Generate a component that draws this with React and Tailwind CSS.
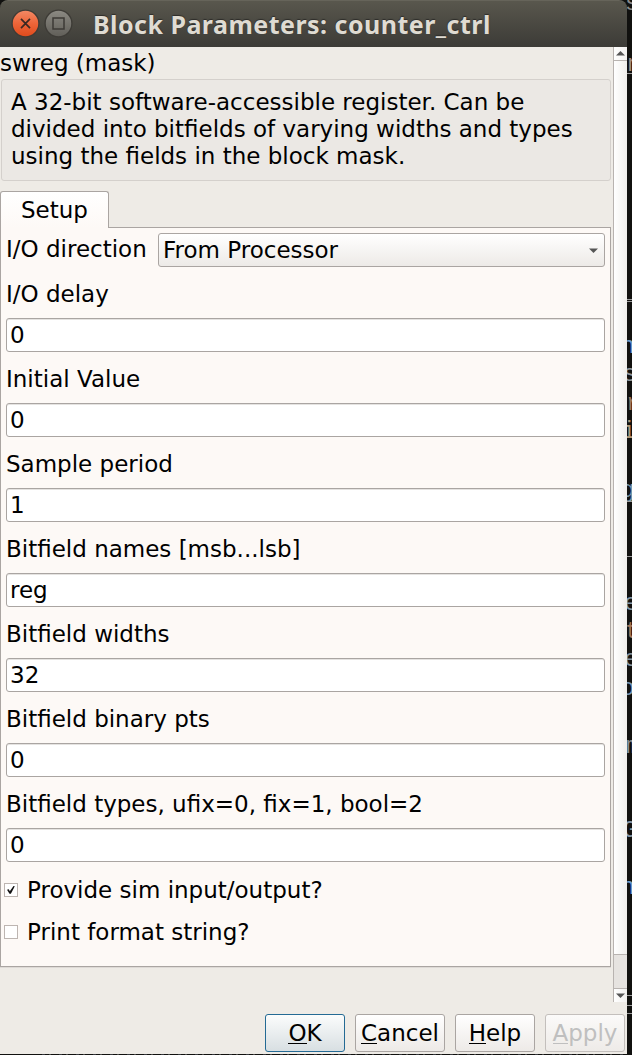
import React from "react";

const fields = [
  ["I/O delay", "0"],
  ["Initial Value", "0"],
  ["Sample period", "1"],
  ["Bitfield names [msb...lsb]", "reg"],
  ["Bitfield widths", "32"],
  ["Bitfield binary pts", "0"],
  ["Bitfield types, ufix=0, fix=1, bool=2", "0"],
];

// Fragments of the terminal window that lies behind the dialog: [glyph, top, colour, left]
const glyphs = [
  ["s", -10, "#8a8a8a", -2],
  ["n", 51, "#a08a80", 0],
  ["n", 333, "#6d9ccb", -6],
  ["s", 361, "#8e9498", -4],
  ["r", 390, "#9a7860", -1],
  ["i", 418, "#b09878", -5],
  ["g", 477, "#7597ad", -6],
  ["e", 590, "#8499a8", -3],
  ["t", 618, "#a07458", -2],
  ["e", 646, "#8797a2", -3],
  ["o", 675, "#7597b5", -6],
  ["m", 733, "#8a8f96", -1],
  ["G", 817, "#8497a8", -4],
  ["n", 874, "#6d9ccb", -6],
];

const lines = [73, 299, 301, 501, 556, 995, 1005, 1013];

function Terminal() {
  return (
    <div className="relative h-[1055px] w-[5px] overflow-hidden bg-[#11110f]">
      {glyphs.map(([g, top, color, left]) => (
        <span
          key={top}
          className="absolute font-['Liberation_Mono',monospace] text-[23px] leading-[28px]"
          style={{ top, left, color }}
        >
          {g}
        </span>
      ))}
      {lines.map((top) => (
        <i key={top} className="absolute left-0 h-px w-[5px] bg-[#9a9a9a]" style={{ top }} />
      ))}
    </div>
  );
}

function TitleBar() {
  return (
    <header className="flex h-[47px] shrink-0 items-center rounded-t-[8px] border-t border-[#66645a] bg-linear-to-b from-[#59574d] to-[#3c3b37] pl-[11px]">
      <svg width="64" height="30" viewBox="0 0 64 30" className="block">
        <defs>
          <linearGradient id="close" x1="0" y1="0" x2="0" y2="1">
            <stop offset="0" stopColor="#f48a66" />
            <stop offset=".5" stopColor="#ed6539" />
            <stop offset="1" stopColor="#df4a1b" />
          </linearGradient>
          <linearGradient id="max" x1="0" y1="0" x2="0" y2="1">
            <stop offset="0" stopColor="#8c8a83" />
            <stop offset="1" stopColor="#605e58" />
          </linearGradient>
        </defs>
        <circle cx="14.5" cy="14.5" r="13.4" fill="url(#close)" stroke="#3d3b36" strokeWidth="1.3" />
        <path d="M10 9.9l9 9.2M19 9.9l-9 9.2" stroke="#3b2822" strokeWidth="1.7" />
        <circle cx="47.5" cy="14.5" r="13.4" fill="url(#max)" stroke="#3d3b36" strokeWidth="1.3" />
        <rect x="42" y="9" width="11" height="11" fill="none" stroke="#3c3a36" strokeWidth="1.5" />
      </svg>
      <h1 className="ml-[18px] whitespace-nowrap font-['Noto_Sans',sans-serif] text-[25px] font-bold leading-[46px] tracking-[0.47px] text-[#dfdbd2] [text-shadow:0_-1px_1px_#2d2c29]">
        Block Parameters: counter_ctrl
      </h1>
    </header>
  );
}

function Check({ on, children }) {
  return (
    <label className="flex h-[42px] items-center pl-[3px]">
      <span className="flex size-[14px] items-center justify-center border border-[#bdb5b1] bg-white">
        {on && (
          <svg width="10" height="10" viewBox="0 0 10 10">
            <path d="M1 4.8l1.8-.6 1 2L7.5 1l1.3.2-3.9 7.6H3.5z" fill="#111" />
          </svg>
        )}
      </span>
      <span className="ml-[9px]">{children}</span>
    </label>
  );
}

function ScrollBar() {
  return (
    <div className="flex h-[955px] w-[14px] flex-col border-l border-[#b8b3b0] bg-[#e6e3e0]">
      <div className="flex h-[14px] items-center justify-center border-b border-[#b8b3b0] bg-linear-to-r from-white to-[#f2f1ef]">
        <svg width="9" height="5" viewBox="0 0 9 5"><path d="M0 4.5L4.5 0 9 4.5z" fill="#555" /></svg>
      </div>
      <div className="h-[894px] border-b border-[#b8b3b0] bg-linear-to-r from-white to-[#efeeeb]" />
      <div className="h-[33px]" />
      <div className="flex h-[14px] items-center justify-center border-t border-[#b8b3b0] bg-linear-to-r from-white to-[#f2f1ef]">
        <svg width="9" height="5" viewBox="0 0 9 5"><path d="M0 .5L4.5 5 9 .5z" fill="#555" /></svg>
      </div>
    </div>
  );
}

function Button({ label, className }) {
  return (
    <button className={`flex h-[38px] items-center justify-center rounded-[3px] border bg-linear-to-b pt-px ${className}`}>
      <span className="relative">
        {label[0]}
        <i className="absolute inset-x-0 bottom-[3px] h-px bg-current" />
      </span>
      {label.slice(1)}
    </button>
  );
}

export default function App() {
  return (
    <div className="flex h-[1055px] w-[632px] overflow-hidden bg-[#11110f] font-['DejaVu_Sans',sans-serif] text-[23px] leading-[27px] text-black">
      <div className="w-[627px]">
        <main className="flex h-[1054px] w-[627px] flex-col">
          <TitleBar />
          <div className="flex h-[955px] bg-[#eeebe6]">
            <div className="w-[613px]">
              <div className="h-[32px] pt-[3px]">swreg (mask)</div>
              <p className="ml-px h-[102px] w-[610px] whitespace-nowrap rounded-[3px] border border-[#d4d0cc] bg-[#ebe8e4] pl-[9px] pt-[9px]">
                A 32-bit software-accessible register. Can be<br />
                divided into bitfields of varying widths and types<br />
                using the fields in the block mask.
              </p>
              <div className="relative z-10 mt-[10px] h-[37px] w-[109px] rounded-t-[3px] border border-b-0 border-[#aaa5a2] bg-linear-to-b from-white to-[#fdf9f6] pl-[20px] pt-[5px]">
                Setup
              </div>
              <section className="-mt-px h-[740px] w-[611px] border border-[#aaa5a2] bg-[#fdf9f6] pl-[5px] pt-[5px] shadow-[0_1px_0_#dedad6]">
                <div className="flex h-[34px] items-center">
                  <span className="w-[152px] pb-[2px]">I/O direction</span>
                  <div className="flex h-[34px] w-[447px] items-center justify-between rounded-[3px] border border-[#aaa5a2] bg-linear-to-b from-white to-[#edeae7] pl-[4px] pr-[6px]">
                    From Processor
                    <svg width="9" height="5" viewBox="0 0 9 5"><path d="M0 .5L4.5 5 9 .5z" fill="#555" /></svg>
                  </div>
                </div>
                {fields.map(([name, value]) => (
                  <div key={name} className="h-[85px] pt-[14px]">
                    <div>{name}</div>
                    <div className="mt-[10px] h-[34px] w-[599px] rounded-[3px] border border-[#aaa5a2] bg-white pl-[3px] pt-[3px] shadow-[inset_0_1px_0_#e5e3e1]">
                      {value}
                    </div>
                  </div>
                ))}
                <div className="-ml-[5px] mt-[7px]">
                  <Check on>Provide sim input/output?</Check>
                  <Check>Print format string?</Check>
                </div>
              </section>
            </div>
            <ScrollBar />
          </div>
          <footer className="flex h-[52px] justify-end gap-[10px] bg-[#eeebe6] pr-[2px] pt-[12px]">
            <Button label="OK" className="w-[80px] border-[#246a94] from-[#fbfcfc] to-[#d8dfe2]" />
            <Button label="Cancel" className="w-[90px] border-[#aaa5a2] from-white to-[#edeae7]" />
            <Button label="Help" className="w-[80px] border-[#aaa5a2] from-white to-[#edeae7]" />
            <Button label="Apply" className="w-[80px] border-[#c3bfbc] from-[#fbfaf9] to-[#eeebe8] text-[#bfbfbf]" />
          </footer>
        </main>
        <div className="ml-[42px] h-px bg-[repeating-linear-gradient(90deg,#35373b_0_3px,#11110f_3px_7px,#454543_7px_9px,#11110f_9px_17px)]" />
      </div>
      <Terminal />
    </div>
  );
}
